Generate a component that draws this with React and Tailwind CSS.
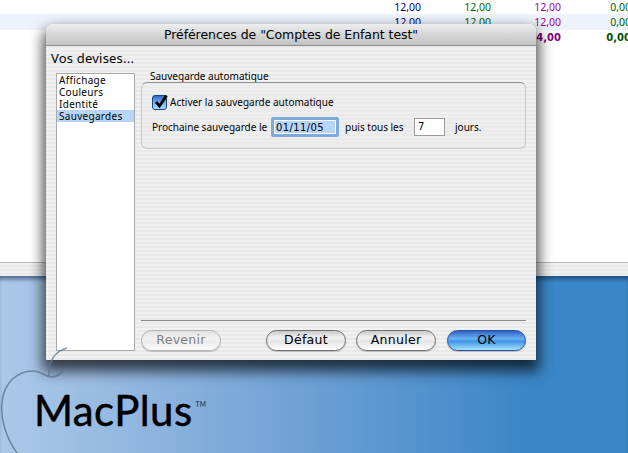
import React from 'react';

const rows = [
  { bg: 'bg-white', h: 'h-[14px] leading-[14px]', cells: ['12,00', '12,00', '12,00', '0,00'], colors: ['text-[#00007f]', 'text-[#006400]', 'text-[#a000a0]', 'text-[#006400]'] },
  { bg: 'bg-[#edf2fb]', h: 'h-[16px] leading-[16px]', cells: ['12,00', '12,00', '12,00', '0,00'], colors: ['text-[#00007f]', 'text-[#006400]', 'text-[#a000a0]', 'text-[#006400]'] },
  { bg: 'bg-white', h: 'h-[16px] leading-[16px]', bold: true, cells: ['', '', '24,00', '0,00'], colors: ['', '', 'text-[#800080]', 'text-[#005000]'] },
];

const stripes = 'bg-[repeating-linear-gradient(180deg,#f1f1f1_0px,#f1f1f1_2px,#e9e9e9_2px,#e9e9e9_4px)]';

const AquaButton = ({ label, width, kind = 'normal' }) => {
  const look = {
    normal: 'border-[#6f6f6f] bg-[linear-gradient(180deg,#c9c9c9_0%,#f2f2f2_35%,#e4e4e4_55%,#ffffff_100%)] text-black',
    disabled: 'border-[#b4b4b4] bg-[linear-gradient(180deg,#e2e2e2_0%,#f2f2f2_40%,#ebebeb_55%,#fafafa_100%)] text-[#7c8184]',
    primary: 'ml-px border-[#2a4f9e] bg-[linear-gradient(180deg,#2c63c9_0%,#6bb0f2_40%,#3f96ea_55%,#a6e2fc_100%)] text-black',
  }[kind];
  return (
    <button className={`h-[21px] ${width} rounded-full border text-[12.5px] leading-none tracking-[0.3px] shadow-[0_1px_1px_rgba(0,0,0,0.2)] ${look}`}>
      {label}
    </button>
  );
};

export default function App() {
  return (
    <div className="relative w-[628px] h-[453px] overflow-hidden bg-white font-['DejaVu_Sans',sans-serif]">
      {/* document behind the dialog */}
      <div className="h-[262px] bg-white font-['Noto_Sans',sans-serif]">
        {rows.map((row, i) => (
          <div key={i} className={`flex pl-[351px] ${row.bg} ${row.h}`}>
            {row.cells.map((cell, j) => (
              <div key={j} className={`w-[70px] shrink-0 text-right ${row.bold ? "font-['DejaVu_Sans',sans-serif] text-[10px] font-bold" : 'text-[10.5px]'} ${row.colors[j]}`}>
                {cell}
              </div>
            ))}
          </div>
        ))}
      </div>
      <div className={`h-[14px] border-t border-[#b9b9b9] ${stripes}`} />

      {/* desktop */}
      <div className="h-[177px] pl-[34px] pt-[112px] bg-[linear-gradient(90deg,#adc8e8_0%,#6c9fd4_50%,#3a86c8_84%)] shadow-[inset_0_5px_4px_-2px_rgba(10,40,80,0.6)]">
        <div className="flex items-start font-['Lato',sans-serif] text-[42px] leading-[44px] text-black tracking-[0.4px] [-webkit-text-stroke:0.5px_black]">
          MacPlus
          <span className="mt-[13px] ml-[3px] text-[6.5px] leading-[8px] font-bold text-[#2d4a70] [-webkit-text-stroke:0]">TM</span>
        </div>
      </div>

      {/* dialog window */}
      <div className={`absolute left-[46px] top-[24px] w-[490px] h-[336px] rounded-t-[8px] shadow-[0_8px_14px_3px_rgba(0,0,0,0.7)] flex flex-col ${stripes}`}>
        <div className="h-[22px] shrink-0 rounded-t-[8px] border-b border-[#8b8b8b] bg-[linear-gradient(180deg,#eeeeee_0%,#d6d6d6_50%,#c2c2c2_100%)] text-center text-[12.5px] leading-[21px] tracking-[-0.06px] text-black">
          Préférences de "Comptes de Enfant test"
        </div>
        <div className="pl-[5px] pt-[5px] h-[27px] shrink-0 font-['Noto_Sans',sans-serif] text-[13px] leading-[15px] tracking-[0.2px] text-black">Vos devises...</div>

        <div className="flex flex-1 pl-[10px] pr-[10px] pb-[9px] gap-[6px]">
          {/* category list */}
          <div className="w-[79px] h-[278px] border border-[#a9a9a9] bg-white font-['Noto_Sans',sans-serif] text-[10px] leading-[12px] tracking-[0.3px] text-black">
            <div className="pl-[2px]">Affichage</div>
            <div className="pl-[2px]">Couleurs</div>
            <div className="pl-[2px]">Identité</div>
            <div className="pl-[2px] bg-[#b6d5f7]">Sauvegardes</div>
          </div>

          {/* settings pane */}
          <div className="flex-1 flex flex-col font-['Noto_Sans',sans-serif]">
            <div className="pl-[9px] h-[9px] text-[10px] leading-[7px] text-black whitespace-nowrap">Sauvegarde automatique</div>
            <div className="h-[67px] rounded-[6px] border border-[#c9c9c9] border-t-[#8f8f8f] bg-[#ebebeb]/40 pl-[10px] pt-[11px]">
              <div className="flex items-center h-[16px]">
                <div className="relative w-[15px] h-[15px] rounded-[3px] border border-[#1f3f86] bg-[linear-gradient(180deg,#2f69c4_0%,#7db7ee_55%,#a9dcf8_100%)]">
                  <svg className="absolute left-[1px] top-[-2px]" width="15" height="15" viewBox="0 0 15 15">
                    <path d="M2 8 L5.5 12 L12.5 1.5" fill="none" stroke="#000" strokeWidth="2.8" />
                  </svg>
                </div>
                <span className="ml-[3px] text-[10px] leading-none text-black whitespace-nowrap">Activer la sauvegarde automatique</span>
              </div>
              <div className="flex items-center h-[20px] mt-[7px] text-[10px] text-black whitespace-nowrap">
                <span className="w-[119px]">Prochaine sauvegarde le</span>
                <div className="w-[68px] h-[20px] border-[3px] border-[#7fa9d8] rounded-[2px] bg-white p-px font-['DejaVu_Sans',sans-serif]">
                  <div className="h-full bg-[#b6d5ff] pl-px text-[10px] leading-[13px] tracking-[0.4px]">01/11/05</div>
                </div>
                <span className="ml-[6px] w-[69px]">puis tous les</span>
                <div className="w-[31px] h-[18px] border border-[#9a9a9a] bg-white pl-[3px] font-['DejaVu_Sans',sans-serif] text-[10px] leading-[16px]">7</div>
                <span className="ml-[10px]">jours.</span>
              </div>
            </div>
            <div className="flex-1" />
            <div className="border-t border-[#8a8a8a] pt-[9px] flex items-center font-['DejaVu_Sans',sans-serif]">
              <AquaButton label="Revenir" width="w-[80px]" kind="disabled" />
              <div className="flex-1" />
              <div className="flex items-center gap-[10px]">
                <AquaButton label="Défaut" width="w-[80px]" />
                <AquaButton label="Annuler" width="w-[80px]" />
                <AquaButton label="OK" width="w-[79px]" kind="primary" />
              </div>
            </div>
          </div>
        </div>
      </div>

      {/* apple outline of the logo, it runs over the window corner */}
      <svg className="absolute left-0 top-[340px]" width="80" height="113" viewBox="0 0 80 113">
        <path d="M17 113 C6 98 0 78 2 62 C4 42 18 31 33 31 C40 31 45 36 51 37 C57 37 62 33 65 28" fill="none" stroke="#5f7590" strokeOpacity="0.8" strokeWidth="1.6" />
        <path d="M67 8 C56 11 48 20 49 36" fill="none" stroke="#5f7590" strokeOpacity="0.75" strokeWidth="1.6" />
      </svg>
    </div>
  );
}
